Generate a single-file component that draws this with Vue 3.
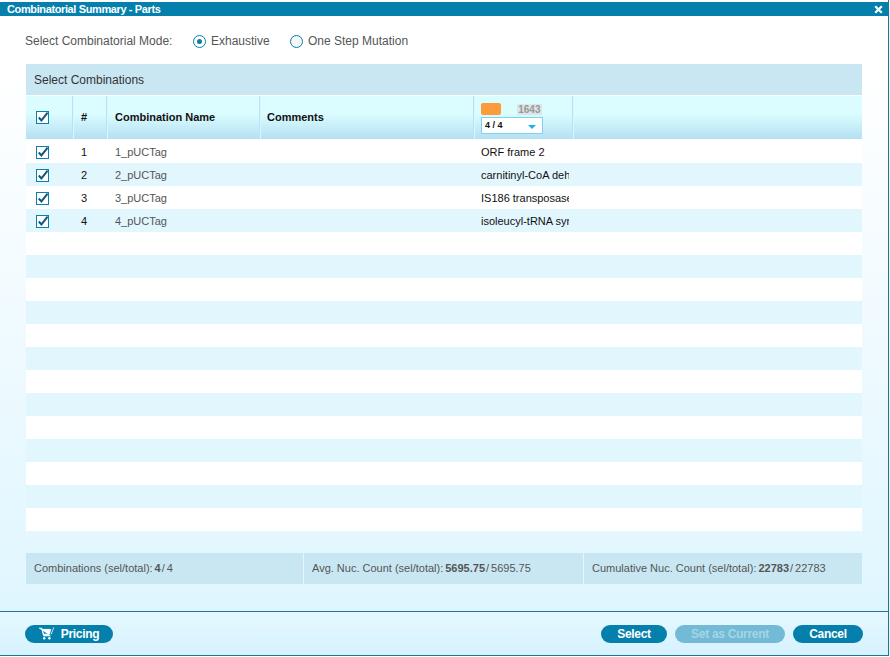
<template>
  <div class="dialog">
    <div class="title-bar">
      <span>Combinatorial Summary - Parts</span>
      <svg class="close" width="9" height="9" viewBox="0 0 9 9"><path d="M1.2 1.2 7.8 7.8M7.8 1.2 1.2 7.8" stroke="#fff" stroke-width="2.2" /></svg>
    </div>
    <div class="body">
      <div class="mode-row">
        <span class="mode-label">Select Combinatorial Mode:</span>
        <span class="radio on"></span>
        <span class="radio-text first">Exhaustive</span>
        <span class="radio"></span>
        <span class="radio-text">One Step Mutation</span>
      </div>

      <div class="panel-title">Select Combinations</div>
      <div class="head">
        <div class="c-check">
          <svg class="check" viewBox="0 0 13 13" width="13" height="13"><rect x=".5" y=".5" width="12" height="12" fill="#fff" stroke="#0a7fa9" /><path d="M2.8 6.5 5.4 9.4 11.6 1.6" fill="none" stroke="#10587c" stroke-width="2" /></svg>
        </div>
        <div class="c-num">#</div>
        <div class="c-name">Combination Name</div>
        <div class="c-comments">Comments</div>
        <div class="c-part">
          <div class="part-top">
            <span class="swatch"></span>
            <span class="count">1643</span>
          </div>
          <div class="part-select">
            <span>4 / 4</span>
            <span class="arrow"></span>
          </div>
        </div>
        <div class="c-rest"></div>
      </div>

      <div class="rows">
        <div v-for="(row, i) in rows" :key="i" class="row" :class="{ alt: i % 2 === 1 }">
          <template v-if="row.name">
            <div class="c-check">
              <svg class="check" viewBox="0 0 13 13" width="13" height="13"><rect x=".5" y=".5" width="12" height="12" fill="#fff" stroke="#0a7fa9" /><path d="M2.8 6.5 5.4 9.4 11.6 1.6" fill="none" stroke="#10587c" stroke-width="2" /></svg>
            </div>
            <div class="c-num">{{ i + 1 }}</div>
            <div class="c-name">{{ row.name }}</div>
            <div class="c-comments"></div>
            <div class="c-part"><span class="part-text">{{ row.part }}</span></div>
          </template>
        </div>
      </div>

      <div class="summary">
        <div class="sum one">Combinations (sel/total):<b>4</b><i>/</i>4</div>
        <div class="sum two">Avg. Nuc. Count (sel/total):<b>5695.75</b><i>/</i>5695.75</div>
        <div class="sum three">Cumulative Nuc. Count (sel/total):<b>22783</b><i>/</i>22783</div>
      </div>
    </div>

    <div class="footer">
      <button class="btn pricing">
        <svg width="16" height="13" viewBox="0 0 16 13"><path d="M0 1.2h2.8L4.6 8.8h6.8M3.2 2.4h8.4L10.4 7.2H4.4z" fill="#fff" stroke="#fff" stroke-width=".9" /><path d="M12 7.4 14.8 .4" stroke="#fff" stroke-width=".8" fill="none" /><circle cx="5.2" cy="11.2" r="1.2" fill="#fff" /><circle cx="10.4" cy="11.2" r="1.2" fill="#fff" /></svg>
        Pricing
      </button>
      <div class="spacer"></div>
      <button class="btn select">Select</button>
      <button class="btn current" disabled>Set as Current</button>
      <button class="btn cancel">Cancel</button>
    </div>
  </div>
</template>

<script setup>
const parts = [
  { name: '1_pUCTag', part: 'ORF frame 2' },
  { name: '2_pUCTag', part: 'carnitinyl-CoA dehydratase' },
  { name: '3_pUCTag', part: 'IS186 transposase' },
  { name: '4_pUCTag', part: 'isoleucyl-tRNA synthetase' }
]
const rows = Array.from({ length: 17 }, (_, i) => parts[i] || {})
</script>

<style>
html, body { margin: 0; background: #fff; }
</style>

<style scoped>
.dialog { width: 889px; height: 656px; padding-top: 2px; box-sizing: border-box; display: flex; flex-direction: column; font-family: "Liberation Sans", Arial, sans-serif; background: linear-gradient(#fff 0, #fff 10%, #e0f6ff 92%); border-bottom: 1px solid #1f7596; border-right: 1px solid #1f7596; box-shadow: 0 1px 1px #8aa; overflow: hidden; }
.title-bar { height: 14px; flex: none; background: #0580ad; color: #fff; font-size: 11px; font-weight: bold; letter-spacing: -.38px; line-height: 13px; padding-left: 7px; display: flex; align-items: center; justify-content: space-between; }
.close { margin-right: 5px; }
.body { flex: 1; padding: 0 26px; }
.mode-row { height: 48px; display: flex; align-items: center; font-size: 12px; color: #555; padding-top: 2px; box-sizing: border-box; }
.mode-label { width: 168px; margin-left: -1px; }
.radio { width: 11px; height: 11px; border: 1px solid #0a7fa9; border-radius: 50%; background: #f2f6f7; position: relative; margin-right: 5px; flex: none; }
.radio.on { background: #fff; }
.radio.on::after { content: ""; position: absolute; left: 3px; top: 3px; width: 5px; height: 5px; border-radius: 50%; background: #0a7fa9; }
.radio-text.first { width: 79px; }
.panel-title { height: 31px; background: #c9e7f3; color: #333; font-size: 12px; line-height: 32px; padding-left: 8px; }
.head { margin-top: 1px; height: 43px; display: flex; background: linear-gradient(#dbfdff 0, #dbfdff 40%, #b5e0f2 100%); font-size: 11px; font-weight: bold; color: #111; line-height: 11px; }
.head > div { display: flex; align-items: center; border-right: 1px solid #b5e3f3; box-shadow: 1px 0 0 #d9f7fd; padding-bottom: 1px; }
.rows { margin-top: 1px; }
.row { height: 23px; display: flex; align-items: center; background: #fff; font-size: 11px; color: #111; }
.row.alt { background: #e2f6fd; }
.row .check { margin-top: 1px; }
.c-check { width: 47px; padding-left: 10px; box-sizing: border-box; display: flex; align-items: center; }
.check { display: block; }
.c-num { width: 34px; padding-left: 8px; box-sizing: border-box; }
.c-name { width: 153px; padding-left: 8px; box-sizing: border-box; }
.row .c-name { color: #555; }
.c-comments { width: 214px; padding-left: 7px; box-sizing: border-box; }
.c-part { width: 99px; padding-left: 7px; box-sizing: border-box; }
.head .c-part { display: block; padding-top: 7px; padding-bottom: 0; }
.c-rest { flex: 1; border-right: none !important; box-shadow: none !important; }
.part-top { display: flex; justify-content: space-between; align-items: center; width: 61px; height: 12px; }
.swatch { width: 20px; height: 12px; background: #fb9b3c; border-radius: 2px; }
.count { background: #dce5e8; color: #999; font-size: 10px; line-height: 11px; padding: 0 1.5px; }
.part-select { margin-top: 2px; width: 57px; height: 15px; border: 1px solid #7fd0f3; background: #fff; font-size: 9px; line-height: 15px; padding-left: 3px; position: relative; }
.arrow { position: absolute; right: 6px; top: 7px; border: 4px solid transparent; border-top: 4px solid #1fb0ee; border-bottom: 0; }
.part-text { display: block; width: 88px; overflow: hidden; white-space: nowrap; }
.summary { margin-top: 22px; height: 31px; display: flex; background: #c9e7f3; font-size: 11px; color: #555; line-height: 31px; }
.sum { padding-left: 8px; box-sizing: border-box; white-space: nowrap; }
.sum b { margin-left: 2px; }
.sum i { font-style: normal; margin: 0 2px 0 1px; }
.sum.one { width: 278px; border-right: 1px solid #e6f6fc; }
.sum.two { width: 280px; border-right: 1px solid #e6f6fc; }
.sum.three { flex: 1; }
.footer { height: 44px; flex: none; border-top: 1px solid #1f7596; display: flex; align-items: center; padding: 0 25px 0 25px; gap: 8px; box-sizing: border-box; background: linear-gradient(#e6f8ff, #d6f2ff); }
.spacer { flex: 1; }
.btn { height: 18px; border: none; border-radius: 9px; background: #0580ad; color: #fff; font-family: inherit; font-size: 12px; font-weight: bold; letter-spacing: -.3px; padding: 0; display: flex; align-items: center; justify-content: center; }
.pricing { width: 88px; gap: 6px; }
.select { width: 66px; }
.current { width: 110px; background: #72bad6; color: #a5d5e7; }
.cancel { width: 70px; }
</style>
